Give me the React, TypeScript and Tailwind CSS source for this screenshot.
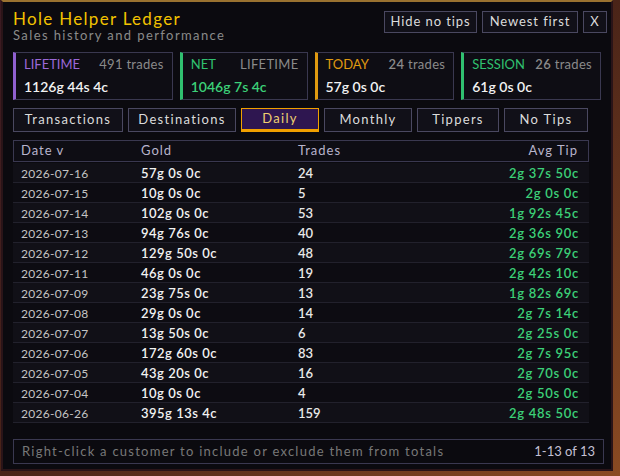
const rows = [
  ['2026-07-16', '57g 0s 0c', '24', '2g 37s 50c'],
  ['2026-07-15', '10g 0s 0c', '5', '2g 0s 0c'],
  ['2026-07-14', '102g 0s 0c', '53', '1g 92s 45c'],
  ['2026-07-13', '94g 76s 0c', '40', '2g 36s 90c'],
  ['2026-07-12', '129g 50s 0c', '48', '2g 69s 79c'],
  ['2026-07-11', '46g 0s 0c', '19', '2g 42s 10c'],
  ['2026-07-09', '23g 75s 0c', '13', '1g 82s 69c'],
  ['2026-07-08', '29g 0s 0c', '14', '2g 7s 14c'],
  ['2026-07-07', '13g 50s 0c', '6', '2g 25s 0c'],
  ['2026-07-06', '172g 60s 0c', '83', '2g 7s 95c'],
  ['2026-07-05', '43g 20s 0c', '16', '2g 70s 0c'],
  ['2026-07-04', '10g 0s 0c', '4', '2g 50s 0c'],
  ['2026-06-26', '395g 13s 4c', '159', '2g 48s 50c'],
];

const tabs = ['Transactions', 'Destinations', 'Daily', 'Monthly', 'Tippers', 'No Tips'];
const tabW = ['w-[110px]', 'w-[108px]', 'w-[78px]', 'w-[88px]', 'w-[82px]', 'w-[84px]'];

function Card({ accent, label, labelColor, right, value, valueColor, w }: {
  accent: string; label: string; labelColor: string; right: React.ReactNode; value: string; valueColor: string; w: string;
}) {
  return (
    <div className={`${w} h-[48px] border border-[#3a3850] border-l-[3px] ${accent} bg-[#0e0d14] flex flex-col justify-center px-[8px] gap-[2px]`}>
      <div className="flex justify-between items-baseline text-[13px]">
        <span className={labelColor}>{label}</span>
        <span className="text-[#8a8a8a] tracking-[0.3px]">{right}</span>
      </div>
      <div className={`text-[14px] font-semibold ${valueColor}`}>{value}</div>
    </div>
  );
}

export default function App() {
  return (
    <div className="w-[620px] h-[476px] bg-gradient-to-br from-[#3a1a22] via-[#4a2418] to-[#8a4a22] overflow-hidden" style={{ fontFamily: 'Lato, "Open Sans", sans-serif' }}>
      <div className="ml-[1px] w-[612px] h-[471px] bg-[#0b0a0f] border-l-[2px] border-r-[2px] border-b-[2px] border-[#2a1418] border-t-[2px] border-t-[#9a7230] flex flex-col px-[10px]">
        {/* Header */}
        <div className="flex justify-between pt-[8px]">
          <div className="flex flex-col">
            <div className="text-[#f2c200] text-[17px] leading-[18px] tracking-[1.3px]">Hole Helper Ledger</div>
            <div className="text-[#8a8a8a] text-[13px] leading-[14px] tracking-[1.4px]">Sales history and performance</div>
          </div>
          <div className="flex gap-[5px] mt-[1px] mr-[-6px]">
            {['Hide no tips', 'Newest first', 'X'].map((t, i) => (
              <div key={t} className={`${['w-[93px]', 'w-[96px]', 'w-[24px]'][i]} h-[22px] border border-[#4a4860] bg-[#111018] text-[#dcdcdc] text-[13px] flex items-center justify-center tracking-[0.9px]`}>{t}</div>
            ))}
          </div>
        </div>

        {/* Stats */}
        <div className="flex gap-[7px] mt-[10px]">
          <Card w="w-[160px]" accent="border-l-[#9060d0]" label="LIFETIME" labelColor="text-[#9a68d8]" right={<>491 trades</>} value="1126g 44s 4c" valueColor="text-[#f2f2f2]" />
          <Card w="w-[128px]" accent="border-l-[#30c070]" label="NET" labelColor="text-[#30c070]" right={<>LIFETIME</>} value="1046g 7s 4c" valueColor="text-[#3cd078]" />
          <Card w="w-[140px]" accent="border-l-[#e09a10]" label="TODAY" labelColor="text-[#e09a10]" right={<><span className="font-semibold">24</span> trades</>} value="57g 0s 0c" valueColor="text-[#f2f2f2]" />
          <Card w="w-[140px]" accent="border-l-[#30c070]" label="SESSION" labelColor="text-[#30c070]" right={<><span className="font-semibold">26</span> trades</>} value="61g 0s 0c" valueColor="text-[#f2f2f2]" />
        </div>

        {/* Tabs */}
        <div className="flex gap-[5px] mt-[8px]">
          {tabs.map((t, i) => (
            <div
              key={t}
              className={`${tabW[i]} h-[24px] flex items-center justify-center text-[13px] tracking-[1.3px] ${
                t === 'Daily'
                  ? 'bg-[#2e1650] border border-[#f0a000] border-b-[3px] text-[#f0d070]'
                  : 'bg-[#111018] border border-[#4a4860] text-[#dcdcdc]'
              }`}
            >
              {t}
            </div>
          ))}
        </div>

        {/* Table */}
        <div className="w-[576px] mt-[8px]">
          <div className="h-[22px] border border-[#3a3850] bg-[#0e0d14] grid grid-cols-[120px_157px_1fr_auto] items-center px-[7px] text-[13px] text-[#b8b4cc] tracking-[1px]">
            <span>Date v</span>
            <span>Gold</span>
            <span>Trades</span>
            <span className="pr-[3px]">Avg Tip</span>
          </div>
          <div className="mt-[1px]">
            {rows.map((r, i) => (
              <div key={r[0]} className={`h-[20px] border-b border-[#22212c] grid grid-cols-[120px_157px_1fr_auto] items-center px-[8px] pt-[1px] ${i % 2 === 0 ? 'bg-[#111017]' : 'bg-[#0d0c12]'}`}>
                <span className="text-[#c4c4c4] text-[12px] tracking-[0.3px]">{r[0]}</span>
                <span className="text-[#f2f2f2] text-[13px] font-semibold tracking-[0.5px]">{r[1]}</span>
                <span className="text-[#e8e8e8] text-[13px] font-semibold">{r[2]}</span>
                <span className="text-[#3cd078] text-[13px] font-semibold pr-[2px] tracking-[0.7px]">{r[3]}</span>
              </div>
            ))}
          </div>
        </div>

        {/* Footer */}
        <div className="w-[591px] h-[25px] mt-[16px] border border-[#3a3850] flex items-center justify-between px-[8px] text-[13px]">
          <span className="text-[#787878] tracking-[1.25px]">Right-click a customer to include or exclude them from totals</span>
          <span className="text-[#c4c0d4]">1-13 of 13</span>
        </div>
      </div>
    </div>
  );
}
